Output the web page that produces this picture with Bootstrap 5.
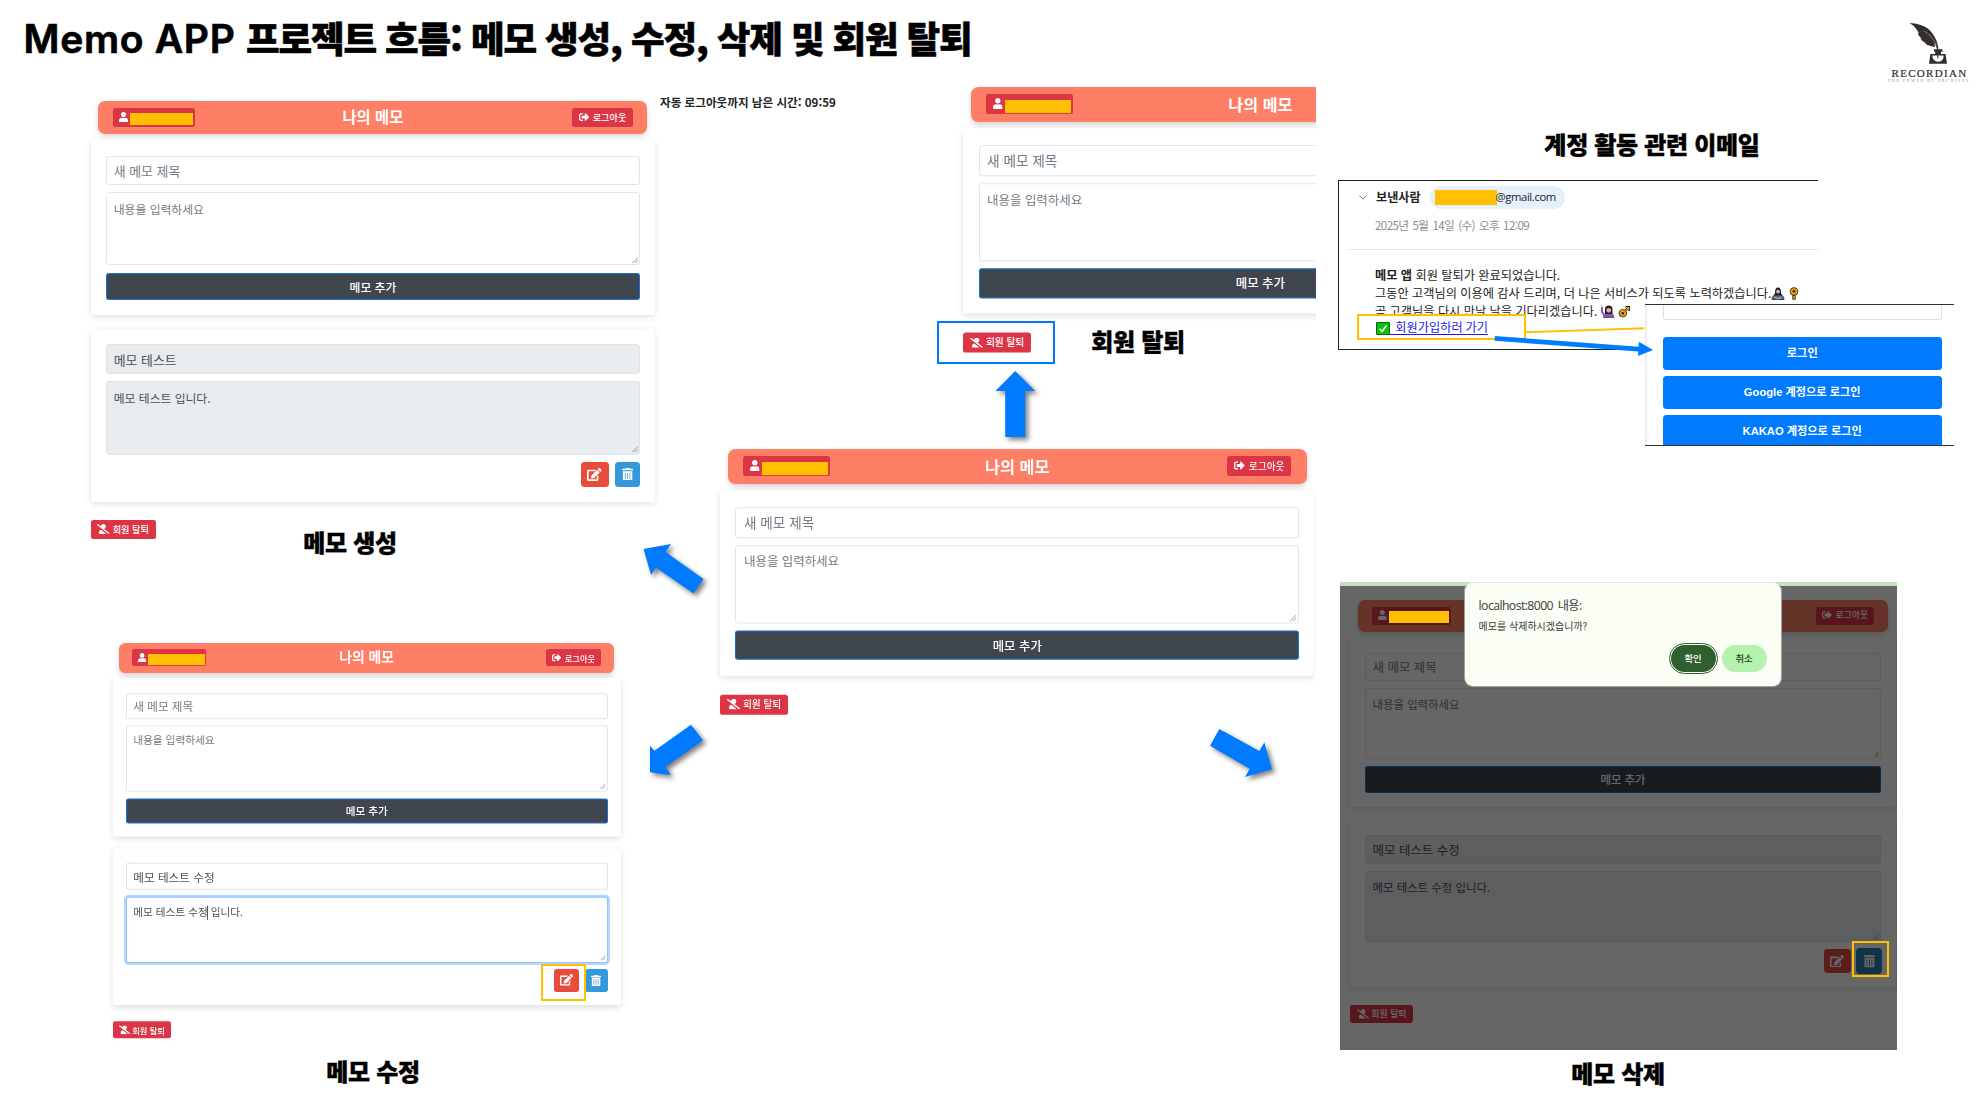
<!DOCTYPE html>
<html lang="ko">
<head>
<meta charset="utf-8">
<meta name="viewport" content="width=device-width, initial-scale=1">
<title>Memo APP 프로젝트 흐름</title>
<link href="https://cdn.jsdelivr.net/npm/bootstrap@5.3.0/dist/css/bootstrap.min.css" rel="stylesheet">
<style>
body{margin:0;background:#fff;font-family:"Noto Sans CJK KR","Noto Sans",sans-serif;color:#212529}
.slide{width:1983px;height:1105px}
.slide svg{display:block;flex:none}
/* free canvas items */
.pin{position:absolute}
.heading{left:23.5px;top:11px;font-size:36.6px;font-weight:900;line-height:54px;letter-spacing:-1.15px;color:#000;-webkit-text-stroke:.5px #000}
.heading .latin{font-family:Inter,sans-serif;font-weight:600;font-size:39px;letter-spacing:.7px;margin-right:10.5px;-webkit-text-stroke:.7px #000}
.caption{font-size:24px;font-weight:900;line-height:34px;letter-spacing:-.3px;color:#000;text-align:center;transform:translate(-50%,-1px);-webkit-text-stroke:.4px #000}
.timer{left:660px;top:94px;font-size:11.6px;font-weight:700;line-height:17px}

/* memo application window; --u is the window's zoom */
.memo{--u:1px;width:calc(564*var(--u));color:#495057;transform-origin:0 0}
.memo .bar{margin:0 calc(7.5*var(--u)) calc(6*var(--u));height:calc(33*var(--u));padding:0 calc(14.5*var(--u));background:#ff7f66;border-radius:calc(7*var(--u));box-shadow:0 2px 5px rgba(0,0,0,.16)}
.memo .bar-title{font-size:calc(15.4*var(--u));font-weight:700;line-height:1;color:#fff;margin-top:-1px}
.memo .chip{background:#dc3545;color:#fff;border-radius:calc(2.5*var(--u));height:calc(19*var(--u));font-size:calc(9.2*var(--u));font-weight:500;line-height:1}
.memo .chip-user{width:calc(82*var(--u));padding-left:calc(6.5*var(--u));gap:calc(1.9*var(--u))}
.memo .chip-out{width:calc(60.6*var(--u));gap:calc(3.6*var(--u))}
.memo .chip-leave{width:calc(64.7*var(--u));gap:calc(2.6*var(--u));margin-top:calc(18*var(--u))}
.memo .hide-name{background:#ffc000;width:calc(63*var(--u));height:calc(12.4*var(--u));margin-top:calc(3.4*var(--u))}
.memo .sheet{background:#fff;border-radius:calc(3*var(--u));padding:calc(16*var(--u)) calc(14.7*var(--u)) calc(14.6*var(--u));gap:calc(7.3*var(--u));box-shadow:0 2px 6px rgba(0,0,0,.12)}
.memo .sheet-saved{margin-top:calc(13.7*var(--u));padding:calc(15*var(--u)) calc(14.7*var(--u));gap:calc(7*var(--u))}
.memo .field{border:1px solid #e3e5e8;border-radius:calc(3*var(--u));background:#fff;padding:0 calc(7.2*var(--u));color:#737b83}
.memo .line{height:calc(29*var(--u));font-size:calc(12.9*var(--u));line-height:calc(29*var(--u) - 1px)}
.memo .area{height:calc(73.4*var(--u));font-size:calc(11.8*var(--u));line-height:calc(17*var(--u));padding-top:calc(6.9*var(--u))}
.memo .sheet-saved .line{height:calc(30.5*var(--u));line-height:calc(30*var(--u))}
.memo .sheet-saved .field{color:#495057}
.memo .locked{background:#e9ecef;border-color:#dfe2e5}
.memo .focused{border-color:#8fc5ff;box-shadow:0 0 0 2px #b3d7ff}
.memo .grip{right:1px;bottom:1px;width:calc(6.5*var(--u));height:calc(6.5*var(--u));stroke:#888}
.memo .caret{display:inline-block;width:1px;height:1.3em;background:#555;vertical-align:middle;margin:0 0 0 -1px}
.memo .add{height:calc(27.7*var(--u));background:#40464d;border:1px solid #1673dc;border-radius:calc(2.5*var(--u));color:#fff;font-size:calc(11.8*var(--u));line-height:1;font-weight:500}
.memo .tools{gap:calc(6.6*var(--u))}
.memo .tool{height:calc(25*var(--u));border-radius:calc(3.5*var(--u));color:#fff}
.memo .tool-edit{width:calc(28*var(--u));background:#e74c3c}
.memo .tool-del{width:calc(25*var(--u));background:#3498db}
.memo .tool-hover{background:#2980b9;transform:scale(1.08)}
.ic{fill:currentColor}
.ic-user{width:calc(9.1*var(--u));height:calc(10.4*var(--u));margin-top:calc(-1.2*var(--u))}
.ic-out{width:calc(10.3*var(--u));height:calc(10.3*var(--u));margin-top:calc(-1*var(--u))}
.ic-leave{width:calc(12.6*var(--u));height:calc(10.2*var(--u))}
.ic-edit{width:calc(14.6*var(--u));height:calc(13*var(--u))}
.ic-del{width:calc(11.2*var(--u));height:calc(12.6*var(--u))}

.w-create{left:90.9px;top:100.8px}
.w-edit{left:112.6px;top:643px;--u:.901px;transform:scaleY(1.003)}
.crop-leave{left:950px;top:80px;width:366px;height:280px;overflow:hidden}
.w-leave{left:13px;top:6.7px;--u:1.0545px;transform:scaleY(1.002)}
.crop-main{left:700px;top:440px;width:615px;height:290px;overflow:hidden}
.w-main{left:20px;top:9.3px;--u:1.054px;transform:scaleY(1.003)}
.w-delete-screen{left:1340px;top:582px;width:557px;height:468px;overflow:hidden;background:#fff}
.w-delete{left:10.3px;top:17.9px;--u:.967px}
.shade{inset:0;background:rgba(0,0,0,.6);border-top:4px solid #c3e0c3;background-clip:padding-box}
.mark-box{border:2px solid #ffc000}
.mark-blue{left:937px;top:321px;width:118px;height:43px;border:2px solid #007bff}

.confirm{left:123.6px;top:0;width:318px;height:105px;background:#fafef4;border:1px solid #9da39b;border-top-color:#e3e8de;border-radius:9px;padding:13px 14px 14px;color:#37403a}
.confirm .host{font-family:"Open Sans","Noto Sans CJK KR",sans-serif;font-size:12.2px;letter-spacing:-.55px;word-spacing:2px;line-height:20px}
.confirm .ask{font-size:10px;line-height:14px;margin-top:3px}
.confirm .pill{width:45px;height:27px;border-radius:14px;font-size:9.4px;font-weight:500;line-height:1;color:#1c3a1c;background:#b4f2ad}
.confirm .pill-ok{background:#2f5e2f;color:#fff;outline:1.5px solid #2f5e2f;outline-offset:1.5px}

.mail{left:1338px;top:180px;width:480px;height:170px;border:1.4px solid #222;border-right:0;background:#fff;color:#222;font-size:12.2px}
.mail .from{padding:5px 0 0 20px;height:28px}
.mail .from b{font-size:12.1px;margin:0 9px 0 9px}
.mail .addr{width:135px;height:23px;border-radius:12px;background:#e5f0fc;padding-left:5px;font-family:"Open Sans",sans-serif;font-size:11.3px;letter-spacing:-.4px}
.mail .hide-addr{width:62px;height:15px;background:#ffc000;margin-right:-1px}
.mail .date{margin:7.5px 0 0 36px;color:#8d8d8d;line-height:17px;font-size:11.6px;letter-spacing:-.6px;word-spacing:1.4px}
.mail .rule{height:1px;background:#e8e8e8;margin:15.500px 0 0 8px}
.mail .letter{margin:17.4px 0 0 36px;line-height:17.6px;white-space:nowrap}
.mail .em{display:inline-block;vertical-align:-2px}
.mail-link{left:1356.500px;top:314px;width:169px;height:26px;background:#fff;border:2px solid #ffc000;padding-left:17px;padding-top:2.5px;font-size:12.2px;line-height:1;color:#1a1aee}
.mail-link a{color:#1a1aee;line-height:1;text-underline-offset:2px;word-spacing:-.5px}
.login{left:1644.5px;top:304px;width:309.5px;height:142px;overflow:hidden;background:#fff;border-top:1.4px solid #333;border-bottom:1.4px solid #333;padding:0 12.500px 0 18.500px;gap:5.6px;font-family:"Liberation Sans","Noto Sans CJK KR",sans-serif;box-shadow:inset 4px 0 3px -3px rgba(0,0,0,.12)}
.login .rest{height:15px;flex:none;border:1px solid #dcdfe2;border-top:0;border-radius:0 0 3px 3px;margin-bottom:11.500px}
.login .go{height:33.4px;border-radius:3.5px;background:#007bff;color:#fff;font-weight:700;font-size:11.2px;line-height:1;flex:none}

.brand{left:1880px;top:20px;width:98px;color:#332d2b}
.brand .name{font-family:"Liberation Serif",serif;font-size:11px;letter-spacing:1.3px;line-height:11px;padding-left:1px;-webkit-text-stroke:.2px #332d2b}
.brand .tag{font-family:"Liberation Serif",serif;font-size:3.8px;letter-spacing:1.65px;line-height:5px;color:#8a8583;white-space:nowrap}
.arrows{left:0;top:0;pointer-events:none}
.arrows .fat{fill:#007bff;filter:drop-shadow(3px 3px 2.5px rgba(0,0,0,.5))}
</style>
</head>
<body>
<svg width="0" height="0" class="position-absolute">
  <symbol id="user" viewBox="0 0 448 512"><path d="M224 256c70.7 0 128-57.3 128-128S294.7 0 224 0 96 57.3 96 128s57.3 128 128 128zm89.6 32h-16.7c-22.2 10.2-46.9 16-72.9 16s-50.6-5.8-72.9-16h-16.7C60.2 288 0 348.2 0 422.4V464c0 26.5 21.5 48 48 48h352c26.5 0 48-21.5 48-48v-41.6c0-74.2-60.2-134.4-134.4-134.4z"/></symbol>
  <symbol id="out" viewBox="0 0 512 512"><path d="M497 273L329 441c-15 15-41 4.5-41-17v-96H152c-13.3 0-24-10.7-24-24v-96c0-13.3 10.7-24 24-24h136V88c0-21.4 25.9-32 41-17l168 168c9.3 9.4 9.3 24.6 0 34zM192 436v-40c0-6.6-5.4-12-12-12H96c-17.7 0-32-14.3-32-32V160c0-17.7 14.3-32 32-32h84c6.6 0 12-5.4 12-12V76c0-6.6-5.4-12-12-12H96c-53 0-96 43-96 96v192c0 53 43 96 96 96h84c6.6 0 12-5.4 12-12z"/></symbol>
  <symbol id="leave" viewBox="0 0 640 512"><path d="M633.8 458.1L362.3 248.3C412.1 230.7 448 183.8 448 128 448 57.3 390.7 0 320 0c-67.1 0-121.5 51.8-126.9 117.4L45.5 3.4C38.5-2 28.5-.8 23 6.2L3.4 31.4c-5.4 7-4.2 17 2.8 22.4l588.4 454.7c7 5.4 17 4.2 22.5-2.8l19.6-25.3c5.4-6.8 4.1-16.9-2.9-22.3zM96 422.4V464c0 26.5 21.5 48 48 48h350.2L207.4 290.3C144.2 301.3 96 356 96 422.4z"/></symbol>
  <symbol id="edit" viewBox="0 0 576 512"><path d="M402.6 83.2l90.2 90.2c3.8 3.8 3.8 10 0 13.8L274.4 405.6l-92.8 10.3c-12.4 1.4-22.9-9.1-21.5-21.5l10.3-92.8L388.8 83.2c3.8-3.8 10-3.8 13.8 0zm162-22.9l-48.8-48.8c-15.2-15.2-39.9-15.2-55.2 0l-35.4 35.4c-3.8 3.8-3.8 10 0 13.8l90.2 90.2c3.8 3.8 10 3.8 13.8 0l35.4-35.4c15.2-15.3 15.2-40 0-55.2zM384 346.2V448H64V128h229.8c3.2 0 6.2-1.3 8.5-3.5l40-40c7.6-7.6 2.2-20.5-8.5-20.5H48C21.5 64 0 85.5 0 112v352c0 26.5 21.5 48 48 48h352c26.5 0 48-21.5 48-48V306.2c0-10.7-12.9-16-20.5-8.5l-40 40c-2.2 2.3-3.5 5.3-3.5 8.5z"/></symbol>
  <symbol id="del" viewBox="0 0 448 512"><path d="M32 464a48 48 0 0 0 48 48h288a48 48 0 0 0 48-48V128H32zm272-256a16 16 0 0 1 32 0v224a16 16 0 0 1-32 0zm-96 0a16 16 0 0 1 32 0v224a16 16 0 0 1-32 0zm-96 0a16 16 0 0 1 32 0v224a16 16 0 0 1-32 0zM432 32H312l-9.4-18.7A24 24 0 0 0 281.1 0H166.8a23.72 23.72 0 0 0-21.4 13.3L136 32H16A16 16 0 0 0 0 48v32a16 16 0 0 0 16 16h416a16 16 0 0 0 16-16V48a16 16 0 0 0-16-16z"/></symbol>
  <symbol id="grip" viewBox="0 0 7 7"><path d="M.5 6.5l6-6M3.5 6.5l3-3" fill="none" stroke-width=".9"/></symbol>
</svg>

<main class="slide position-relative overflow-hidden">
  <h1 class="pin heading m-0 text-nowrap"><span class="latin">Memo APP</span>프로젝트 흐름: 메모 생성, 수정, 삭제 및 회원 탈퇴</h1>

  <div class="pin brand d-flex flex-column align-items-center">
    <svg width="98" height="48" viewBox="0 0 98 48">
      <path d="M29.5 3c7 .2 16 2.500 20.500 7.500 3.500 3.500 6.200 8.500 7.500 13.500.6 2 .9 4 .8 5.800l-1.200-.3c-.6-2.500-1.500-4.500-3-6.500l1 4c-3.500-.5-7.500-1.500-10.300-3.500l1.500-.3c-2.500-1-5-3-6-5l1.700.4c-2-1.500-3.800-3.500-4.500-5.700l1.500.8C37 10 36 7 29.500 3z" fill="#332d2b"/>
      <path d="M44 11c5 3 9.500 7.500 12.500 14.500" fill="none" stroke="#fff" stroke-width=".4"/>
      <path d="M54 29.300h8.500v2.400H61V34h4.600l1.400 9.700H49L50.400 34h4.800v-2.300H54z" fill="#332d2b"/>
      <path d="M52.500 35.500h11c.5 3-1.500 6.200-5.300 6.200s-6.200-3.200-5.700-6.200z" fill="#fff"/>
      <path d="M58.200 30l-.5 8.500" stroke="#332d2b" stroke-width="1"/>
    </svg>
    <div class="name">RECORDIAN</div>
    <div class="tag">THE POWER OF ARCHIVES</div>
  </div>

  <!-- create -->
  <section class="pin memo w-create">
    <header class="bar d-flex align-items-center justify-content-between position-relative">
      <div class="chip chip-user d-flex align-items-center"><svg class="ic ic-user"><use href="#user"/></svg><span class="hide-name"></span></div>
      <div class="bar-title position-absolute start-50 translate-middle-x">나의 메모</div>
      <div class="chip chip-out d-flex align-items-center justify-content-center"><svg class="ic ic-out"><use href="#out"/></svg>로그아웃</div>
    </header>
    <div class="sheet d-flex flex-column">
      <div class="field line">새 메모 제목</div>
      <div class="field area position-relative">내용을 입력하세요<svg class="grip position-absolute"><use href="#grip"/></svg></div>
      <div class="add d-flex align-items-center justify-content-center">메모 추가</div>
    </div>
    <div class="sheet sheet-saved d-flex flex-column">
      <div class="field line locked">메모 테스트</div>
      <div class="field area locked position-relative">메모 테스트 입니다.<svg class="grip position-absolute"><use href="#grip"/></svg></div>
      <div class="tools d-flex justify-content-end">
        <div class="tool tool-edit d-flex align-items-center justify-content-center"><svg class="ic ic-edit"><use href="#edit"/></svg></div>
        <div class="tool tool-del d-flex align-items-center justify-content-center"><svg class="ic ic-del"><use href="#del"/></svg></div>
      </div>
    </div>
    <div class="chip chip-leave d-flex align-items-center justify-content-center"><svg class="ic ic-leave"><use href="#leave"/></svg>회원 탈퇴</div>
  </section>
  <div class="pin timer text-nowrap">자동 로그아웃까지 남은 시간: 09:59</div>
  <h2 class="pin caption m-0 text-nowrap" style="left:350px;top:526px">메모 생성</h2>

  <!-- leave -->
  <div class="pin crop-leave">
    <section class="pin memo w-leave">
      <header class="bar d-flex align-items-center justify-content-between position-relative">
        <div class="chip chip-user d-flex align-items-center"><svg class="ic ic-user"><use href="#user"/></svg><span class="hide-name"></span></div>
        <div class="bar-title position-absolute start-50 translate-middle-x">나의 메모</div>
      </header>
      <div class="sheet d-flex flex-column">
        <div class="field line">새 메모 제목</div>
        <div class="field area">내용을 입력하세요</div>
        <div class="add d-flex align-items-center justify-content-center">메모 추가</div>
      </div>
      <div class="chip chip-leave d-flex align-items-center justify-content-center"><svg class="ic ic-leave"><use href="#leave"/></svg>회원 탈퇴</div>
    </section>
  </div>
  <div class="pin mark-blue"></div>
  <h2 class="pin caption m-0 text-nowrap" style="left:1138px;top:325px">회원 탈퇴</h2>

  <!-- main -->
  <div class="pin crop-main">
    <section class="pin memo w-main">
      <header class="bar d-flex align-items-center justify-content-between position-relative">
        <div class="chip chip-user d-flex align-items-center"><svg class="ic ic-user"><use href="#user"/></svg><span class="hide-name"></span></div>
        <div class="bar-title position-absolute start-50 translate-middle-x">나의 메모</div>
        <div class="chip chip-out d-flex align-items-center justify-content-center"><svg class="ic ic-out"><use href="#out"/></svg>로그아웃</div>
      </header>
      <div class="sheet d-flex flex-column">
        <div class="field line">새 메모 제목</div>
        <div class="field area position-relative">내용을 입력하세요<svg class="grip position-absolute"><use href="#grip"/></svg></div>
        <div class="add d-flex align-items-center justify-content-center">메모 추가</div>
      </div>
      <div class="chip chip-leave d-flex align-items-center justify-content-center"><svg class="ic ic-leave"><use href="#leave"/></svg>회원 탈퇴</div>
    </section>
  </div>

  <!-- edit -->
  <section class="pin memo w-edit">
    <header class="bar d-flex align-items-center justify-content-between position-relative">
      <div class="chip chip-user d-flex align-items-center"><svg class="ic ic-user"><use href="#user"/></svg><span class="hide-name"></span></div>
      <div class="bar-title position-absolute start-50 translate-middle-x">나의 메모</div>
      <div class="chip chip-out d-flex align-items-center justify-content-center"><svg class="ic ic-out"><use href="#out"/></svg>로그아웃</div>
    </header>
    <div class="sheet d-flex flex-column">
      <div class="field line">새 메모 제목</div>
      <div class="field area position-relative">내용을 입력하세요<svg class="grip position-absolute"><use href="#grip"/></svg></div>
      <div class="add d-flex align-items-center justify-content-center">메모 추가</div>
    </div>
    <div class="sheet sheet-saved d-flex flex-column">
      <div class="field line">메모 테스트 수정</div>
      <div class="field area focused position-relative">메모 테스트 수정<span class="caret"></span> 입니다.<svg class="grip position-absolute"><use href="#grip"/></svg></div>
      <div class="tools d-flex justify-content-end">
        <div class="tool tool-edit d-flex align-items-center justify-content-center"><svg class="ic ic-edit"><use href="#edit"/></svg></div>
        <div class="tool tool-del d-flex align-items-center justify-content-center"><svg class="ic ic-del"><use href="#del"/></svg></div>
      </div>
    </div>
    <div class="chip chip-leave d-flex align-items-center justify-content-center"><svg class="ic ic-leave"><use href="#leave"/></svg>회원 탈퇴</div>
  </section>
  <div class="pin mark-box" style="left:541px;top:963.500px;width:45px;height:37px"></div>
  <h2 class="pin caption m-0 text-nowrap" style="left:373px;top:1055px">메모 수정</h2>

  <!-- mail -->
  <h2 class="pin caption m-0 text-nowrap" style="left:1652px;top:128px">계정 활동 관련 이메일</h2>
  <article class="pin mail">
    <div class="from d-flex align-items-center">
      <svg width="8" height="5" viewBox="0 0 8 5"><path d="M.5.500L4 4.200 7.500.500" fill="none" stroke="#777"/></svg>
      <b>보낸사람</b>
      <div class="addr d-flex align-items-center"><span class="hide-addr"></span>@gmail.com</div>
    </div>
    <div class="date">2025년 5월 14일 (수) 오후 12:09</div>
    <div class="rule"></div>
    <div class="letter">
      <div><b>메모 앱</b> 회원 탈퇴가 완료되었습니다.</div>
      <div>그동안 고객님의 이용에 감사 드리며, 더 나은 서비스가 되도록 노력하겠습니다.<svg class="em" width="14" height="13" viewBox="0 0 14 13"><path d="M1 12.500C1 9.500 3 7 7 7s6 2.500 6 5.500z" fill="#5a6a7c" stroke="#111" stroke-width=".7"/><path d="M4 6C4 2 5 .500 7 .500S10 2 10 6l1 2.500H3z" fill="#1d2430"/><circle cx="7" cy="4.600" r="1.900" fill="#d8b59c"/><path d="M3.500 10l3.500 2 3.500-2" stroke="#a9d4ee" fill="none"/></svg>&nbsp;<svg class="em" width="10" height="13" viewBox="0 0 10 13"><circle cx="5" cy="4.500" r="3.900" fill="#e9a400" stroke="#222" stroke-width=".8"/><circle cx="5" cy="4.200" r="1.300" fill="#222"/><path d="M3.700 8.500h2.600v3.800H3.700z" fill="#e9a400" stroke="#222" stroke-width=".8"/></svg></div>
      <div>곧 고객님을 다시 만날 날을 기다리겠습니다. <svg class="em" width="14" height="13" viewBox="0 0 14 13"><path d="M2.500 12.500C2.500 9.500 4 8 7.500 8s5 1.500 5.500 4.500z" fill="#8257c9" stroke="#222" stroke-width=".6"/><path d="M1 2v5l3 4" stroke="#8257c9" stroke-width="2" fill="none"/><circle cx="1.300" cy="1.500" r="1.100" fill="#d8b59c"/><path d="M4 9V4c0-2.500 1.500-3.500 3.800-3.500S11.500 2 11.500 4v5z" fill="#2b1d22"/><circle cx="7.800" cy="5.300" r="2.400" fill="#d8b59c"/></svg>&nbsp;<svg class="em" width="12" height="12" viewBox="0 0 12 12"><circle cx="4.800" cy="7.200" r="3.800" fill="#e9a400" stroke="#222" stroke-width=".8"/><circle cx="4.800" cy="7.200" r="1.200" fill="#222"/><path d="M7.500 4.500L10 2M7.500 1.200H11V5" fill="none" stroke="#222" stroke-width="2.200"/><path d="M7.500 4.500L10 2M8 1.500h2.700V4.500" fill="none" stroke="#e9a400" stroke-width="1.100"/></svg></div>
    </div>
  </article>
  <div class="pin mail-link d-flex align-items-center text-nowrap">
    <a href="#"><svg class="d-inline-block align-middle" width="14" height="13" viewBox="0 0 14 13"><path d="M.5.500h13v12H.5z" fill="#0ac20a" stroke="#076d07"/><path d="M3.500 6.700l2.500 2.800 4.500-6" fill="none" stroke="#fff" stroke-width="1.500"/></svg>&nbsp; 회원가입하러 가기</a>
  </div>
  <div class="pin login d-flex flex-column">
    <div class="rest"></div>
    <div class="go d-flex align-items-center justify-content-center">로그인</div>
    <div class="go d-flex align-items-center justify-content-center">Google 계정으로 로그인</div>
    <div class="go d-flex align-items-center justify-content-center">KAKAO 계정으로 로그인</div>
  </div>

  <!-- delete -->
  <div class="pin w-delete-screen">
    <section class="pin memo w-delete">
      <header class="bar d-flex align-items-center justify-content-between position-relative">
        <div class="chip chip-user d-flex align-items-center"><svg class="ic ic-user"><use href="#user"/></svg></div>
        <div class="chip chip-out d-flex align-items-center justify-content-center"><svg class="ic ic-out"><use href="#out"/></svg>로그아웃</div>
      </header>
      <div class="sheet d-flex flex-column">
        <div class="field line">새 메모 제목</div>
        <div class="field area position-relative">내용을 입력하세요<svg class="grip position-absolute"><use href="#grip"/></svg></div>
        <div class="add d-flex align-items-center justify-content-center">메모 추가</div>
      </div>
      <div class="sheet sheet-saved d-flex flex-column">
        <div class="field line locked">메모 테스트 수정</div>
        <div class="field area locked position-relative">메모 테스트 수정 입니다.<svg class="grip position-absolute"><use href="#grip"/></svg></div>
        <div class="tools d-flex justify-content-end">
          <div class="tool tool-edit d-flex align-items-center justify-content-center"><svg class="ic ic-edit"><use href="#edit"/></svg></div>
          <div class="tool tool-del tool-hover d-flex align-items-center justify-content-center"><svg class="ic ic-del"><use href="#del"/></svg></div>
        </div>
      </div>
      <div class="chip chip-leave d-flex align-items-center justify-content-center"><svg class="ic ic-leave"><use href="#leave"/></svg>회원 탈퇴</div>
    </section>
    <div class="pin shade"></div>
    <div class="pin" style="left:49px;top:29px;width:59.500px;height:11.500px;background:#ffc000"></div>
    <div class="pin confirm d-flex flex-column">
      <div class="host">localhost:8000 내용:</div>
      <div class="ask">메모를 삭제하시겠습니까?</div>
      <div class="d-flex justify-content-end mt-auto" style="gap:6px">
        <div class="pill pill-ok d-flex align-items-center justify-content-center">확인</div>
        <div class="pill d-flex align-items-center justify-content-center">취소</div>
      </div>
    </div>
    <div class="pin mark-box" style="left:511.500px;top:359px;width:37px;height:36px"></div>
  </div>
  <h2 class="pin caption m-0 text-nowrap" style="left:1618px;top:1057px">메모 삭제</h2>

  <svg class="pin arrows" width="1983" height="1105" viewBox="0 0 1983 1105">
    <path class="fat" d="M1015.200 371l20 20h-10v46h-20v-46h-9.800z"/>
    <path class="fat" d="M643.500 549l27.500-5-5.500 8 38 27-10 14.500-37.500-26-5 7.500z"/>
    <path class="fat" d="M691 724.700l12 15.600-37.600 26.700 5.600 8-21-2.700v-26.600l4.400 5z"/>
    <path class="fat" d="M1219.300 729l40 22 5-8.700 7.700 27-27 7.700 4.700-8.300-39.700-23z"/>
    <path d="M1525.700 332.300l118.800-4" stroke="#ffc000" stroke-width="2"/>
    <path d="M1494.900 336l143.600 10.700.4-5L1653 350l-15 6 .3-4.500-143.700-10.800z" fill="#007bff"/>
  </svg>
</main>
<script src="https://cdn.jsdelivr.net/npm/bootstrap@5.3.0/dist/js/bootstrap.bundle.min.js"></script>
</body>
</html>
